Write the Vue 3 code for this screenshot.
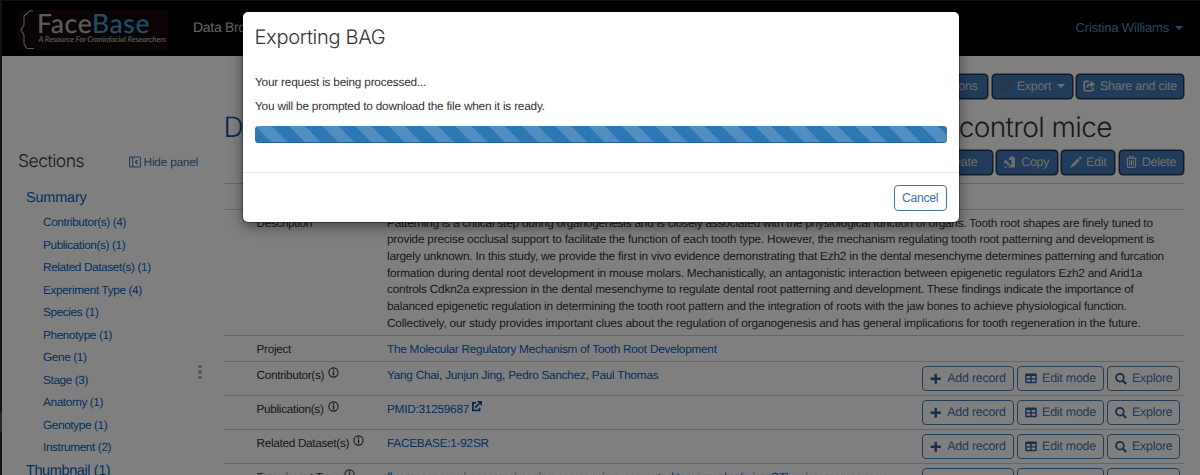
<script setup>
const sections = [
  'Contributor(s) (4)', 'Publication(s) (1)', 'Related Dataset(s) (1)', 'Experiment Type (4)',
  'Species (1)', 'Phenotype (1)', 'Gene (1)', 'Stage (3)', 'Anatomy (1)', 'Genotype (1)', 'Instrument (2)',
]
const description = [
  'Patterning is a critical step during organogenesis and is closely associated with the physiological function of organs. Tooth root shapes are finely tuned to',
  'provide precise occlusal support to facilitate the function of each tooth type. However, the mechanism regulating tooth root patterning and development is',
  'largely unknown. In this study, we provide the first in vivo evidence demonstrating that Ezh2 in the dental mesenchyme determines patterning and furcation',
  'formation during dental root development in mouse molars. Mechanistically, an antagonistic interaction between epigenetic regulators Ezh2 and Arid1a',
  'controls Cdkn2a expression in the dental mesenchyme to regulate dental root patterning and development. These findings indicate the importance of',
  'balanced epigenetic regulation in determining the tooth root pattern and the integration of roots with the jaw bones to achieve physiological function.',
  'Collectively, our study provides important clues about the regulation of organogenesis and has general implications for tooth regeneration in the future.',
]
const related = [
  { label: 'Contributor(s)', links: ['Yang Chai', 'Junjun Jing', 'Pedro Sanchez', 'Paul Thomas'] },
  { label: 'Publication(s)', links: ['PMID:31259687'], external: true },
  { label: 'Related Dataset(s)', links: ['FACEBASE:1-92SR'] },
  { label: 'Experiment Type', links: ['fluorescence microscopy imaging assay', 'micro-computed tomography (microCT)', 'microscopy assay'] },
]
</script>

<template>
  <div class="page">
    <div class="edge"><i></i></div>
    <header class="navbar">
      <div class="logo">
        <svg class="brace" width="17" height="40" viewBox="0 0 17 40"><path d="M14 .8H11L5 6V15L2 20L5 25V34L8 38.5H15" fill="none" stroke="#a8a8a8" stroke-width="1.1" /></svg>
        <div class="brand">
          <div class="name">Face<b>Base</b></div>
          <div class="tag">A Resource For Craniofacial Researchers</div>
        </div>
      </div>
      <span class="nav">Data Browser</span>
      <span class="user">Cristina Williams<i class="caret"></i></span>
    </header>

    <div class="body">
      <aside class="side">
        <div class="side-head">
          <span class="sections">Sections</span>
          <span class="hide">
            <svg width="12" height="12" viewBox="0 0 12 12" fill="none" stroke="currentColor"><path d="M.6 1H11.4V11H.6ZM3.7 1V11" /><path d="M8.6 4L6.4 6L8.6 8" stroke-width="1.2" /></svg>
            <span>Hide panel</span>
          </span>
        </div>
        <div class="top-link">Summary</div>
        <div v-for="s in sections" :key="s" class="sub-link">{{ s }}</div>
        <div class="top-link thumb">Thumbnail (1)</div>
      </aside>
      <div class="grip"><i></i><i></i><i></i></div>

      <main class="main">
        <div class="actions first">
          <span class="btn solid permissions">Permissions</span>
          <span class="btn solid export">
            <svg class="spin" width="12" height="12" viewBox="0 0 12 12" fill="none" stroke="currentColor" stroke-width="1.7"><path d="M1.4 5.2A4.7 4.7 0 0 1 9.6 3M10.6 6.8A4.7 4.7 0 0 1 2.4 9" /><path d="M10.8 .8V4.2H7.4M1.2 11.2V7.8H4.6" stroke-width="1.3" /></svg>
            <span>Export</span><i class="caret"></i>
          </span>
          <span class="btn solid share">
            <svg width="12" height="12" viewBox="0 0 12 12" fill="none" stroke="currentColor" stroke-width="1.6"><path d="M6 1.4H3Q1.2 1.4 1.2 3.2V9Q1.2 10.8 3 10.8H8.2Q10 10.8 10 9V7.6" /><path d="M4.3 7.6Q4.4 4.4 8 4.4" stroke-width="1.9" /><path d="M7.5 .8L12 4.3L7.5 7.7Z" fill="currentColor" stroke="none" /></svg>
            <span>Share and cite</span>
          </span>
        </div>
        <div class="title"><span class="blue">Dataset:</span><span class="rest">control mice</span></div>
        <div class="actions second">
          <span class="btn solid create">Create</span>
          <span class="btn solid copy">
            <svg width="12" height="12" viewBox="0 0 12 12" fill="currentColor"><path d="M5 1.6H6.5Q6.5 .2 7.9 .2T9.3 1.6H11V11.5H4.3L7.5 8V3.7H5Z" /><path d="M.2 4.4H4L3 5.4L6.2 8.5L4.7 10L1.5 6.8L.2 8Z" /><path d="M.3 10.6H3V11.6H.3Z" /></svg>
            <span>Copy</span>
          </span>
          <span class="btn solid edit">
            <svg width="12" height="12" viewBox="0 0 12 12" fill="currentColor"><path d="M8.7 1.5L10.1.1L12 1.9L10.6 3.4ZM8 2.2L9.9 4.1L3.6 10.4L.2 11.8L1.7 8.4Z" /></svg>
            <span>Edit</span>
          </span>
          <span class="btn solid delete">
            <svg width="11" height="12" viewBox="0 0 11 12" fill="none" stroke="currentColor" stroke-width="1.1"><path d="M.2 2.3H10.8M3.5 2V.7H7.5V2M1.4 2.5V10.2Q1.4 11.4 2.6 11.4H8.4Q9.6 11.4 9.6 10.2V2.5M3.7 4.3V9.4M5.5 4.3V9.4M7.3 4.3V9.4" /></svg>
            <span>Delete</span>
          </span>
        </div>

        <div class="record">
          <div class="row blank"></div>
          <div class="row desc">
            <span class="label">Description</span>
            <div><p v-for="(line, n) in description" :key="n">{{ line }}</p></div>
          </div>
          <div class="row project">
            <span class="label">Project</span>
            <a>The Molecular Regulatory Mechanism of Tooth Root Development</a>
          </div>
          <div v-for="r in related" :key="r.label" class="row rel">
            <span class="label">{{ r.label }}<svg class="info" width="11" height="11" viewBox="0 0 11 11"><circle cx="5.5" cy="5.5" r="4.6" fill="none" stroke="currentColor" stroke-width="1.1" /><path d="M5.5 4.5V8.4" fill="none" stroke="currentColor" stroke-width="1.4" /><circle cx="5.5" cy="3" r=".85" fill="currentColor" /></svg></span>
            <span class="links"><template v-for="(l, i) in r.links" :key="l"><template v-if="i">, </template><a>{{ l }}</a></template><svg v-if="r.external" class="ext" width="11" height="11" viewBox="0 0 11 11" fill="none" stroke="currentColor" stroke-width="1.7"><path d="M5 1.8H1.9V9.4H8.6V6.8M4.2 6.6L8.4 2.5" /><path d="M5.9.1H11V5.1Z" fill="currentColor" stroke="none" /></svg></span>
            <span class="tools">
              <span class="btn line add"><svg width="12" height="12" viewBox="0 0 12 12"><path d="M5.7.8V10.8M.6 5.8H10.8" stroke="currentColor" stroke-width="2.5" /></svg><span>Add record</span></span>
              <span class="btn line mode"><svg width="12" height="11" viewBox="0 0 12 11"><path d="M1.5.4H10.5Q11.8.4 11.8 1.7V9Q11.8 10.3 10.5 10.3H1.5Q.2 10.3.2 9V1.7Q.2.4 1.5.4ZM1.6 3V5.2H5.3V3ZM6.7 3V5.2H10.4V3ZM1.6 6.6V8.8H5.3V6.6ZM6.7 6.6V8.8H10.4V6.6Z" fill="currentColor" fill-rule="evenodd" /></svg><span>Edit mode</span></span>
              <span class="btn line explore"><svg width="12" height="12" viewBox="0 0 12 12" fill="none" stroke="currentColor"><circle cx="4.9" cy="4.7" r="3.9" stroke-width="1.7" /><path d="M7.7 7.5L11.2 11" stroke-width="2.1" /></svg><span>Explore</span></span>
            </span>
          </div>
        </div>
      </main>
    </div>

    <div class="backdrop"></div>
    <section class="modal">
      <h4>Exporting BAG</h4>
      <div class="modal-body">
        <p class="m1">Your request is being processed...</p>
        <p class="m2">You will be prompted to download the file when it is ready.</p>
        <div class="progress"></div>
      </div>
      <footer><button>Cancel</button></footer>
    </section>
  </div>
</template>

<style>
body { margin: 0; overflow: hidden; }
</style>
<style scoped>
* { box-sizing: border-box; }
.page { position: relative; width: 1200px; height: 475px; overflow: hidden; background: #fff; color: #333; font: 11.8px/16.67px "Liberation Sans", Arial, sans-serif; letter-spacing: -.2px; white-space: nowrap; text-rendering: geometricPrecision; }
.page svg { display: block; flex: none; }
p, h4 { margin: 0; font-weight: 400; }
.edge { position: absolute; left: 0; top: 0; width: 2px; height: 475px; background: #232838; z-index: 1; }
.edge i { display: block; width: 2px; height: 20px; margin-top: 412px; background: #4b5266; }
.navbar { height: 56px; background: #000; display: flex; align-items: flex-start; padding-left: 18px; border-top: 1px solid #222; }
.logo { width: 150px; height: 40px; margin-top: 9px; background: #140908; display: flex; }
.brace { margin-left: 1px; }
.brand { margin-left: 1px; font-family: Lato, sans-serif; }
.name { font-size: 26.5px; line-height: 27px; height: 25px; color: #b8b8b8; letter-spacing: .65px; -webkit-text-stroke: .2px currentColor; }
.name b { font-weight: 400; color: #409cd2; }
.tag { font-size: 7.9px; line-height: 9px; margin-left: 1.5px; font-style: italic; font-weight: 700; color: #a0a0a0; letter-spacing: -.12px; }
.nav { margin: 17px 0 0 25px; font-size: 14px; line-height: 18px; color: #c8c8c8; letter-spacing: -.3px; }
.user { margin: 17.5px 17px 0 auto; font-size: 13px; line-height: 18px; color: #4592bd; letter-spacing: -.15px; display: flex; align-items: center; }
.caret { width: 0; height: 0; border: 4px solid transparent; border-top: 4.5px solid currentColor; border-bottom: 0; margin-left: 6px; }
.body { display: flex; height: 419px; }
.side { width: 198px; flex: none; padding: 93px 0 0 18px; }
.side-head { display: flex; justify-content: space-between; align-items: center; height: 24px; }
.sections { font-size: 17.5px; line-height: 25px; font-family: Inter, sans-serif; font-weight: 350; letter-spacing: -.5px; padding-top: 1px; }
.hide { display: flex; gap: 3px; align-items: center; color: #3f74ad; padding-top: 2px; }
.top-link { margin: 13.5px 0 2.5px 8px; font-size: 14.5px; line-height: 22px; color: #0a61bd; letter-spacing: -.2px; }
.top-link.thumb { margin-top: 1px; letter-spacing: -.4px; }
.sub-link { margin-left: 25px; height: 22.5px; line-height: 22px; color: #0a61bd; letter-spacing: -.38px; }
.grip { width: 4px; flex: none; margin-top: 308.5px; display: flex; flex-direction: column; gap: 2px; }
.grip i { width: 3.6px; height: 3.6px; border-radius: 50%; background: #aaa; }
.main { width: 960px; margin-left: 21.5px; }
.actions { display: flex; justify-content: flex-end; gap: 3.5px; height: 26px; }
.first { margin-top: 17.5px; }
.second { margin-top: 5px; }
.btn { height: 25.5px; border-radius: 4px; border: 1px solid #477caf; display: flex; align-items: center; justify-content: center; font-size: 12.4px; letter-spacing: -.22px; }
.btn span { position: relative; top: .5px; }
.line span { top: 0; }
.solid { background: #4078b5; border-color: #1c3550; color: #ddd; box-shadow: 0 0 0 .5px #444; }
.permissions { width: 86px; } .export { width: 81px; gap: 5.5px; } .export .caret { margin-left: 0; }
.spin { color: #67676b; } .share { width: 107.5px; gap: 5.5px; }
.create { width: 66px; } .copy { width: 61.5px; gap: 5px; } .edit { width: 54px; gap: 4.5px; } .delete { width: 65px; gap: 5px; }
.title { display: flex; justify-content: space-between; height: 45px; font: 300 28px/55.5px Inter, "Liberation Sans", sans-serif; letter-spacing: -.6px; }
.blue { color: #004da8; }
.rest { margin-right: 71.5px; }
.record { margin-top: 7px; }
.row { border-top: 1px solid #ccc; display: flex; }
.blank { height: 26px; }
.desc { height: 126.3px; padding-top: 5px; }
.project { height: 26px; padding-top: 5px; }
.rel { height: 34.1px; padding-top: 5px; }
.label { width: 163.5px; padding-left: 33px; flex: none; display: flex; gap: 4px; letter-spacing: -.32px; }
.row a { color: #0a61bd; letter-spacing: -.25px; }
.links { display: flex; white-space: pre; }
.ext { margin: .5px 0 0 1.5px; color: #004da8; }
.tools { margin: -1px 3.5px 0 auto; display: flex; gap: 3px; color: #3f74ad; }
.tools svg { color: #2c5e98; }
.line { gap: 5.5px; }
.add { width: 91.5px; } .mode { width: 87.5px; } .explore { width: 73px; }
.backdrop { position: absolute; inset: 0; background: rgba(0,0,0,.5); z-index: 2; }
.modal { position: absolute; z-index: 3; left: 242.5px; top: 12px; width: 716.5px; height: 210px; background: #fff; border-radius: 5px; box-shadow: 0 4px 13px rgba(0,0,0,.5), 0 0 0 1px rgba(0,0,0,.3); }
h4 { padding: 11px 12px 0; font: 300 20px/28px Inter, sans-serif; letter-spacing: -.3px; height: 62px; }
.modal-body { padding: 0 12.5px; height: 97.5px; }
.m2 { margin-top: 7.5px; }
.progress { height: 17px; margin-top: 11.2px; border-radius: 3.5px; box-shadow: inset 0 -1px 0 #1b64a6; background: linear-gradient(45deg, rgba(255,255,255,.17) 25%, transparent 25%, transparent 50%, rgba(255,255,255,.17) 50%, rgba(255,255,255,.17) 75%, transparent 75%) 0 0 / 33.3px 33.3px #2e77b5; }
footer { border-top: 1.5px solid #ebebeb; display: flex; justify-content: flex-end; padding: 12.5px 12.5px 0; }
button { width: 53px; height: 25.5px; border: 1px solid #4374a7; border-radius: 4px; background: #fff; color: #4374a7; font: 12.3px "Liberation Sans", sans-serif; padding: 1px 0 0; letter-spacing: -.35px; }
</style>
